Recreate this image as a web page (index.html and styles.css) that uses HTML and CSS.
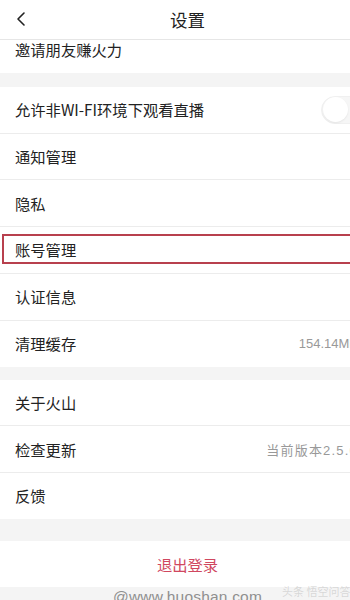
FILE: index.html
```html
<!DOCTYPE html>
<html lang="zh">
<head>
<meta charset="utf-8">
<title>设置</title>
<link rel="stylesheet" href="styles.css">
</head>
<body>
<div class="screen">
  <header class="nav">
    <span class="back">
      <svg width="12" height="16" viewBox="0 0 12 16"><path d="M9 2 L3 8 L9 14" fill="none" stroke="#222" stroke-width="1.6" stroke-linecap="round" stroke-linejoin="round"/></svg>
    </span>
    <h1 class="title">设置</h1>
  </header>
  <main class="content">
    <div class="scroll">
      <section class="group first">
        <div class="row"><span class="label">邀请朋友赚火力</span></div>
      </section>
      <section class="group">
        <div class="row"><span class="label">允许非WI-FI环境下观看直播</span><span class="toggle"><span class="knob"></span></span></div>
        <div class="row"><span class="label">通知管理</span></div>
        <div class="row"><span class="label">隐私</span></div>
        <div class="row marked"><span class="label">账号管理</span></div>
        <div class="row"><span class="label">认证信息</span></div>
        <div class="row"><span class="label">清理缓存</span><span class="value">154.14MB</span></div>
      </section>
      <section class="group">
        <div class="row"><span class="label">关于火山</span></div>
        <div class="row"><span class="label">检查更新</span><span class="value version">当前版本2.5.0</span></div>
        <div class="row"><span class="label">反馈</span></div>
      </section>
      <section class="group logout-group">
        <div class="row logout"><span>退出登录</span></div>
      </section>
      <div class="footer">
        <span class="site">@www.huoshan.com</span>
        <span class="mark">头条 悟空问答</span>
      </div>
    </div>
  </main>
</div>
</body>
</html>
```
FILE: styles.css
```css
html, body {
  margin: 0;
  padding: 0;
  width: 350px;
  height: 600px;
  overflow: hidden;
  background: #f4f4f4;
}
.screen {
  width: 375px;
  height: 600px;
  display: flex;
  flex-direction: column;
  font-family: "Noto Sans CJK SC", "Liberation Sans", sans-serif;
  color: #222;
}
.nav {
  height: 39px;
  flex: none;
  background: #fff;
  border-bottom: 1px solid #e6e6e6;
  display: flex;
  align-items: center;
  justify-content: center;
  position: relative;
  z-index: 2;
}
.back {
  position: absolute;
  left: 15px;
  top: 11px;
  display: flex;
}
.title {
  margin: 0;
  font-size: 17.5px;
  font-weight: normal;
  color: #222;
}
.content {
  flex: 1;
  overflow: hidden;
}
.scroll {
  margin-top: -13px;
}
.group {
  background: #fff;
  margin-bottom: 13px;
}
.group.first {
  margin-bottom: 14px;
}
.row {
  height: 45.8px;
  display: flex;
  align-items: center;
  justify-content: space-between;
  padding: 0 17px 0 15px;
  border-bottom: 1px solid #ececec;
  box-sizing: content-box;
}
.row:last-child {
  border-bottom: none;
}
.label {
  font-size: 15.3px;
  line-height: 1;
  color: #222;
}
.value {
  font-size: 13px;
  color: #999;
  font-family: "Liberation Sans", "Noto Sans CJK SC", sans-serif;
}
.version {
  letter-spacing: 1.2px;
}
.toggle {
  width: 50px;
  height: 28px;
  border-radius: 14px;
  background: #f6f6f6;
  border: 1px solid #f0f0f0;
  box-sizing: border-box;
  display: flex;
  align-items: center;
  padding: 1px;
  margin-right: -13px;
}
.knob {
  width: 25px;
  height: 25px;
  border-radius: 50%;
  background: #fff;
  box-shadow: 0 1px 2px rgba(0,0,0,0.07);
}
.marked {
  position: relative;
}
.marked::after {
  content: "";
  position: absolute;
  left: 2px;
  right: -4px;
  top: 7px;
  bottom: 9px;
  border: 2px solid #b8404e;
  pointer-events: none;
}
.group.logout-group {
  margin-top: 22px;
  margin-bottom: 0;
}
.logout {
  justify-content: center;
  padding: 0;
  font-size: 15.3px;
  color: #d0475f;
}
.footer {
  position: relative;
  height: 30px;
  display: flex;
  justify-content: center;
}
.site {
  margin-top: 1px;
  font-size: 15.5px;
  letter-spacing: 0.2px;
  color: #8f8f8f;
  font-family: "Liberation Sans", sans-serif;
}
.mark {
  position: absolute;
  left: 282px;
  top: -4px;
  font-size: 11px;
  color: rgba(160,160,160,0.35);
}
```
